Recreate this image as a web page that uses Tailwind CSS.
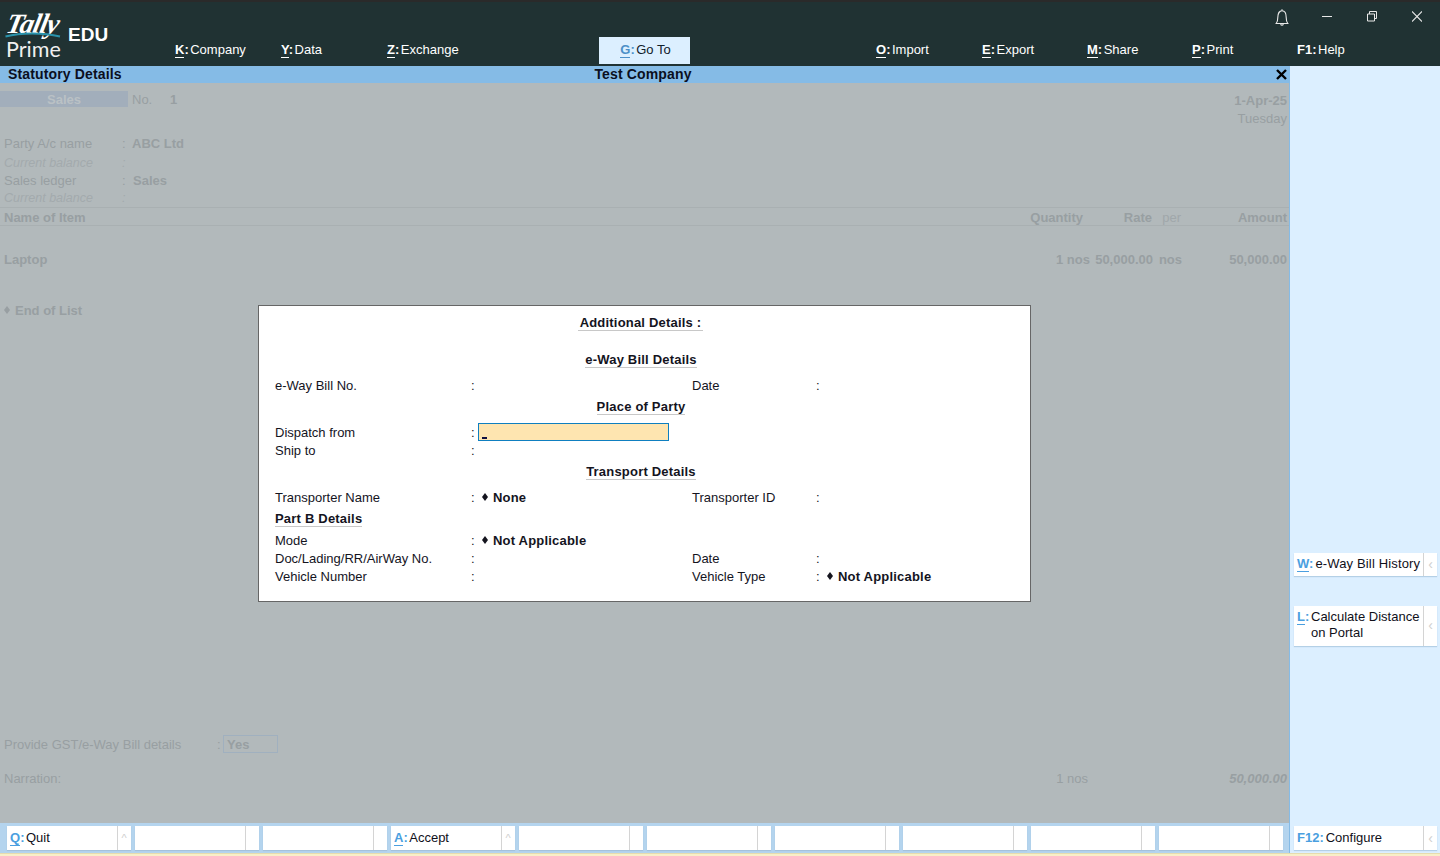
<!DOCTYPE html>
<html lang="en">
<head>
    <meta charset="UTF-8">
    <title>TallyPrime EDU</title>
    <script src="https://cdn.jsdelivr.net/npm/@tailwindcss/browser@4"></script>
</head>
<body class="relative w-[1440px] h-[856px] overflow-hidden flex flex-col font-['Liberation_Sans',Arial,sans-serif] text-[13px] leading-[20px] text-[#10101a]">

    <!-- top bar -->
    <header class="h-[66px] shrink-0 bg-[#203233] border-t-2 border-[#2a2a2a] relative text-white">
        <div class="absolute left-[5px] top-[1px] w-[110px] h-[62px]">
            <span class="absolute left-[2px] top-[6px] text-[28px] leading-[30px] font-bold italic font-['Liberation_Serif',serif] -skew-x-12 text-white tracking-[-1px]">Tally</span>
            <svg class="absolute left-0 top-[26px]" width="56" height="10" viewBox="0 0 56 10"><path d="M0.5 7.500C16 3.500 38 3.500 55 7.500" fill="none" stroke="#2a93ac" stroke-width="2"/></svg>
            <span class="absolute left-[1px] top-[33px] text-[21.500px] leading-[26px] font-normal font-['Lato',sans-serif] text-[#f0f0f0]">Prime</span>
            <span class="absolute left-[63px] top-[21px] text-[19px] leading-[22px] font-bold">EDU</span>
        </div>
        <nav class="absolute left-[175px] top-[34px] right-0 h-[28px] flex items-center">
            <div class="w-[106px]"><b class="font-bold"><span class="border-b border-white">K</span>:</b><span class="ml-[1.500px]">Company</span></div>
            <div class="w-[106px]"><b class="font-bold"><span class="border-b border-white">Y</span>:</b><span class="ml-[1.500px]">Data</span></div>
            <div class="w-[212px]"><b class="font-bold"><span class="border-b border-white">Z</span>:</b><span class="ml-[1.500px]">Exchange</span></div>
            <div class="w-[91px] h-[27px] pl-[2px] bg-[#dcefff] text-[#10202a] flex items-center justify-center"><b class="font-bold text-[#4b8fc8]"><span class="border-b border-[#4b8fc8]">G</span>:</b><span class="ml-[1.500px]">Go To</span></div>
            <div class="w-[106px] ml-[186px]"><b class="font-bold"><span class="border-b border-white">O</span>:</b><span class="ml-[1.500px]">Import</span></div>
            <div class="w-[105px]"><b class="font-bold"><span class="border-b border-white">E</span>:</b><span class="ml-[1.500px]">Export</span></div>
            <div class="w-[105px]"><b class="font-bold"><span class="border-b border-white">M</span>:</b><span class="ml-[1.500px]">Share</span></div>
            <div class="w-[105px]"><b class="font-bold"><span class="border-b border-white">P</span>:</b><span class="ml-[1.500px]">Print</span></div>
            <div><b class="font-bold">F1:</b><span class="ml-[1.500px]">Help</span></div>
        </nav>
        <div class="absolute top-[4px] left-[1272px] flex items-center">
            <svg width="20" height="20" viewBox="0 0 20 20" fill="none" stroke="#e8e8e8" stroke-width="1.100"><path d="M10 3.300v1.500M4.200 17.500c1.300-1.500 1.600-3 1.600-6 0-4 1.800-6.700 4.200-6.700s4.200 2.700 4.200 6.700c0 3 .3 4.500 1.600 6zM8.700 17.800c.2 1 .7 1.400 1.300 1.400s1.100-.4 1.300-1.400"/></svg>
            <svg class="ml-[30px]" width="10" height="20" viewBox="0 0 10 20" stroke="#e8e8e8"><path d="M0 10.500h10"/></svg>
            <svg class="ml-[35px]" width="10" height="20" viewBox="0 0 10 20" fill="none" stroke="#e8e8e8"><path d="M.5 8h7v7h-7zM2.500 8V5.500h7v7H7.500"/></svg>
            <svg class="ml-[35px]" width="10" height="20" viewBox="0 0 10 20" stroke="#e8e8e8" stroke-width="1.100"><path d="M0 5.500l10 10M10 5.500l-10 10"/></svg>
        </div>
    </header>

    <div class="flex-1 flex min-h-0">
        <!-- left pane -->
        <main class="w-[1290px] shrink-0 flex flex-col bg-[#b2b9bb]">
            <div class="h-[17px] shrink-0 bg-[#85bbe6] relative font-bold text-[14px] tracking-[0.15px] leading-[16px] pb-[1px] text-[#0a0f1e] flex items-center justify-center">
                <span class="absolute left-[8px]">Statutory Details</span>
                <span class="-translate-x-[2px]">Test Company</span>
                <svg class="absolute left-[1276px] top-[3px]" width="11" height="11" viewBox="0 0 11 11" stroke="#000" stroke-width="2.400"><path d="M1 1l9 9M10 1l-9 9"/></svg>
            </div>

            <!-- dimmed voucher behind the dialog -->
            <div class="flex-1 flex flex-col text-[#989fa2]">
                <div class="mt-[8px] flex justify-between pr-[3px]">
                    <div class="flex h-[16px] items-center">
                        <div class="w-[128px] h-[16px] bg-[#a2aebb] text-[#bac1c5] font-bold text-center leading-[18px]">Sales</div>
                        <span class="ml-[4px] w-[38px] pt-[2px]">No.</span><b class="pt-[2px]">1</b>
                    </div>
                    <div class="text-right">
                        <div class="h-[18px] font-bold">1-Apr-25</div>
                        <div class="h-[18px]">Tuesday</div>
                    </div>
                </div>
                <div class="mt-[7px] flex h-[18px] pl-[4px]"><span class="w-[118px]">Party A/c name</span><span class="w-[10px]">:</span><b>ABC Ltd</b></div>
                <div class="mt-[1px] flex h-[18px] pl-[4px] italic text-[12.5px] text-[#a3aaad]"><span class="w-[118px]">Current balance</span><span>:</span></div>
                <div class="flex h-[18px] pl-[4px]"><span class="w-[118px]">Sales ledger</span><span class="w-[11px]">:</span><b>Sales</b></div>
                <div class="flex h-[17px] pl-[4px] italic text-[12.5px] leading-[18px] text-[#a3aaad]"><span class="w-[118px]">Current balance</span><span>:</span></div>
                <div class="mt-[1px] h-[19px] pb-[2px] border-y border-[#a9b0b2] pl-[4px] pr-[3px] font-bold grid grid-cols-[1fr_56px_69px_29px_106px] items-center">
                    <span>Name of Item</span>
                    <span class="text-right">Quantity</span>
                    <span class="text-right">Rate</span>
                    <span class="text-right font-normal text-[#a0a7aa]">per</span>
                    <span class="text-right">Amount</span>
                </div>
                <div class="mt-[24px] h-[18px] pl-[4px] pr-[3px] font-bold grid grid-cols-[1fr_64px_63px_29px_105px] whitespace-nowrap">
                    <span>Laptop</span>
                    <span class="text-right">1 nos</span>
                    <span class="text-right">50,000.00</span>
                    <span class="text-right">nos</span>
                    <span class="text-right">50,000.00</span>
                </div>
                <div class="mt-[34px] h-[18px] pl-[4px] font-bold flex items-center"><svg class="w-[6px] h-[8px] mr-[5px] mb-[2px]" viewBox="0 0 6 8"><path d="M3 0l3 4-3 4-3-4z" fill="#989fa2"/></svg>End of List</div>
                <div class="mt-auto flex h-[18px] items-center pl-[4px]">
                    <span class="w-[213px] pt-[2px]">Provide GST/e-Way Bill details</span><span class="w-[6px] pt-[2px]">:</span>
                    <span class="w-[55px] h-[18px] border border-[#a0b0bf] pl-[3px] font-bold leading-[17px]">Yes</span>
                </div>
                <div class="mt-[16px] h-[18px] pl-[4px] pr-[3px] flex mb-[36px] whitespace-nowrap">
                    <span class="flex-1">Narration:</span>
                    <span class="w-[30px] mr-[143px]">1 nos</span>
                    <b class="italic">50,000.00</b>
                </div>
            </div>

            <!-- button row -->
            <footer class="h-[30px] shrink-0 bg-[#b4d4ee] pl-[7px] pt-[3px] flex gap-[4.500px]">
                <div class="w-[123.500px] h-[24px] bg-white flex shadow-[0_1px_1px_#a5c2da]"><div class="flex-1 pl-[3px] leading-[23px]"><b class="font-bold text-[#4b9fe0]"><span class="border-b border-[#4b9fe0]">Q</span>:</b><span class="ml-[1.500px]">Quit</span></div><div class="w-[14px] border-l border-[#d4d4d4] text-center text-[11px] leading-[24px] text-[#cfcfcf]">^</div></div>
                <div class="w-[123.500px] h-[24px] bg-white flex shadow-[0_1px_1px_#a5c2da]"><div class="flex-1"></div><div class="w-[14px] border-l border-[#d4d4d4]"></div></div>
                <div class="w-[123.500px] h-[24px] bg-white flex shadow-[0_1px_1px_#a5c2da]"><div class="flex-1"></div><div class="w-[14px] border-l border-[#d4d4d4]"></div></div>
                <div class="w-[123.500px] h-[24px] bg-white flex shadow-[0_1px_1px_#a5c2da]"><div class="flex-1 pl-[3px] leading-[23px]"><b class="font-bold text-[#4b9fe0]"><span class="border-b border-[#4b9fe0]">A</span>:</b><span class="ml-[1.500px]">Accept</span></div><div class="w-[14px] border-l border-[#d4d4d4] text-center text-[11px] leading-[24px] text-[#cfcfcf]">^</div></div>
                <div class="w-[123.500px] h-[24px] bg-white flex shadow-[0_1px_1px_#a5c2da]"><div class="flex-1"></div><div class="w-[14px] border-l border-[#d4d4d4]"></div></div>
                <div class="w-[123.500px] h-[24px] bg-white flex shadow-[0_1px_1px_#a5c2da]"><div class="flex-1"></div><div class="w-[14px] border-l border-[#d4d4d4]"></div></div>
                <div class="w-[123.500px] h-[24px] bg-white flex shadow-[0_1px_1px_#a5c2da]"><div class="flex-1"></div><div class="w-[14px] border-l border-[#d4d4d4]"></div></div>
                <div class="w-[123.500px] h-[24px] bg-white flex shadow-[0_1px_1px_#a5c2da]"><div class="flex-1"></div><div class="w-[14px] border-l border-[#d4d4d4]"></div></div>
                <div class="w-[123.500px] h-[24px] bg-white flex shadow-[0_1px_1px_#a5c2da]"><div class="flex-1"></div><div class="w-[14px] border-l border-[#d4d4d4]"></div></div>
                <div class="w-[123.500px] h-[24px] bg-white flex shadow-[0_1px_1px_#a5c2da]"><div class="flex-1"></div><div class="w-[14px] border-l border-[#d4d4d4]"></div></div>
            </footer>
        </main>

        <!-- right button bar -->
        <aside class="flex-1 min-w-0 bg-[#dcefff] border-l border-[#85bbe6] -ml-px flex flex-col pl-[4px] pr-[3px]">
            <div class="mt-[487px] h-[23px] bg-white flex shadow-[0_1px_1px_#b4d0e6]">
                <div class="flex-1 pl-[3px] leading-[22px] whitespace-nowrap"><b class="font-bold text-[#4b9fe0]"><span class="border-b border-[#4b9fe0]">W</span>:</b><span class="ml-[2px] tracking-[0.15px]">e-Way Bill History</span></div>
                <div class="w-[14px] border-l border-[#d4d4d4] text-center text-[14px] text-[#cfcfcf] leading-[22px]">‹</div>
            </div>
            <div class="mt-[30px] h-[40px] bg-white flex shadow-[0_1px_1px_#b4d0e6]">
                <div class="flex-1 pl-[3px] pt-[3px] flex leading-[16px]"><b class="font-bold text-[#4b9fe0] w-[14px] shrink-0 h-[17px]"><span class="border-b border-[#4b9fe0]">L</span>:</b><span>Calculate Distance<br>on Portal</span></div>
                <div class="w-[14px] border-l border-[#d4d4d4] text-center text-[14px] text-[#cfcfcf] leading-[38px]">‹</div>
            </div>
            <div class="mt-auto mb-[3px] h-[24px] bg-white flex shadow-[0_1px_1px_#b4d0e6]">
                <div class="flex-1 pl-[3px] leading-[23px]"><b class="font-bold text-[#4b9fe0]">F12:</b><span class="ml-[2px]">Configure</span></div>
                <div class="w-[14px] border-l border-[#d4d4d4] text-center text-[14px] text-[#cfcfcf] leading-[24px]">‹</div>
            </div>
        </aside>
    </div>
    <div class="h-[3px] shrink-0 bg-[#f8efc8] border-t border-[#e6dcae]"></div>

    <!-- Additional Details dialog -->
    <section class="absolute left-[258px] top-[305px] w-[773px] h-[297px] bg-white border border-[#666] pt-[7px] pl-[16px] text-[#14141e]">
        <div class="h-[18px] -ml-[16px] pr-[8px] text-center font-bold tracking-[0.2px]"><span class="inline-block h-[18px] px-[2px] border-b border-[#c8c8c8]">Additional Details :</span></div>
        <div class="mt-[19px] h-[18px] -ml-[16px] pr-[7px] text-center font-bold tracking-[0.2px]"><span class="inline-block h-[18px] border-b border-[#c8c8c8]">e-Way Bill Details</span></div>
        <div class="mt-[8px] h-[18px] flex"><span class="w-[196px]">e-Way Bill No.</span><span class="w-[221px]">:</span><span class="w-[124px]">Date</span><span>:</span></div>
        <div class="mt-[3px] h-[18px] -ml-[16px] pr-[7px] text-center font-bold tracking-[0.2px]"><span class="inline-block h-[18px] border-b border-[#c8c8c8]">Place of Party</span></div>
        <div class="mt-[8px] h-[18px] flex"><span class="w-[196px]">Dispatch from</span><span class="w-[7px]">:</span>
            <span class="w-[191px] h-[18px] bg-[#fee5b0] border border-[#0f7fc0] relative"><i class="absolute left-[3px] bottom-[1px] w-[5px] h-[2px] bg-[#101040]"></i></span>
        </div>
        <div class="h-[18px] flex"><span class="w-[196px]">Ship to</span><span>:</span></div>
        <div class="mt-[3px] h-[18px] -ml-[16px] pr-[7px] text-center font-bold tracking-[0.2px]"><span class="inline-block h-[18px] border-b border-[#c8c8c8]">Transport Details</span></div>
        <div class="mt-[8px] h-[18px] flex"><span class="w-[196px]">Transporter Name</span><span class="w-[11px]">:</span><span class="w-[210px] pt-[2px] font-bold tracking-[0.2px] flex items-center"><svg class="w-[6px] h-[8px] mr-[5px] mb-[3px]" viewBox="0 0 6 8"><path d="M3 0l3 4-3 4-3-4z" fill="#14141e"/></svg>None</span><span class="w-[124px]">Transporter ID</span><span>:</span></div>
        <div class="mt-[3px] h-[18px] font-bold tracking-[0.2px]"><span class="inline-block h-[18px] border-b border-[#c8c8c8]">Part B Details</span></div>
        <div class="mt-[4px] h-[18px] flex"><span class="w-[196px]">Mode</span><span class="w-[11px]">:</span><span class="pt-[2px] font-bold tracking-[0.2px] flex items-center"><svg class="w-[6px] h-[8px] mr-[5px] mb-[3px]" viewBox="0 0 6 8"><path d="M3 0l3 4-3 4-3-4z" fill="#14141e"/></svg>Not Applicable</span></div>
        <div class="h-[18px] flex"><span class="w-[196px]">Doc/Lading/RR/AirWay No.</span><span class="w-[221px]">:</span><span class="w-[124px]">Date</span><span>:</span></div>
        <div class="h-[18px] flex"><span class="w-[196px]">Vehicle Number</span><span class="w-[221px]">:</span><span class="w-[124px]">Vehicle Type</span><span class="w-[11px]">:</span><span class="pt-[2px] font-bold tracking-[0.2px] flex items-center"><svg class="w-[6px] h-[8px] mr-[5px] mb-[3px]" viewBox="0 0 6 8"><path d="M3 0l3 4-3 4-3-4z" fill="#14141e"/></svg>Not Applicable</span></div>
    </section>
</body>
</html>
